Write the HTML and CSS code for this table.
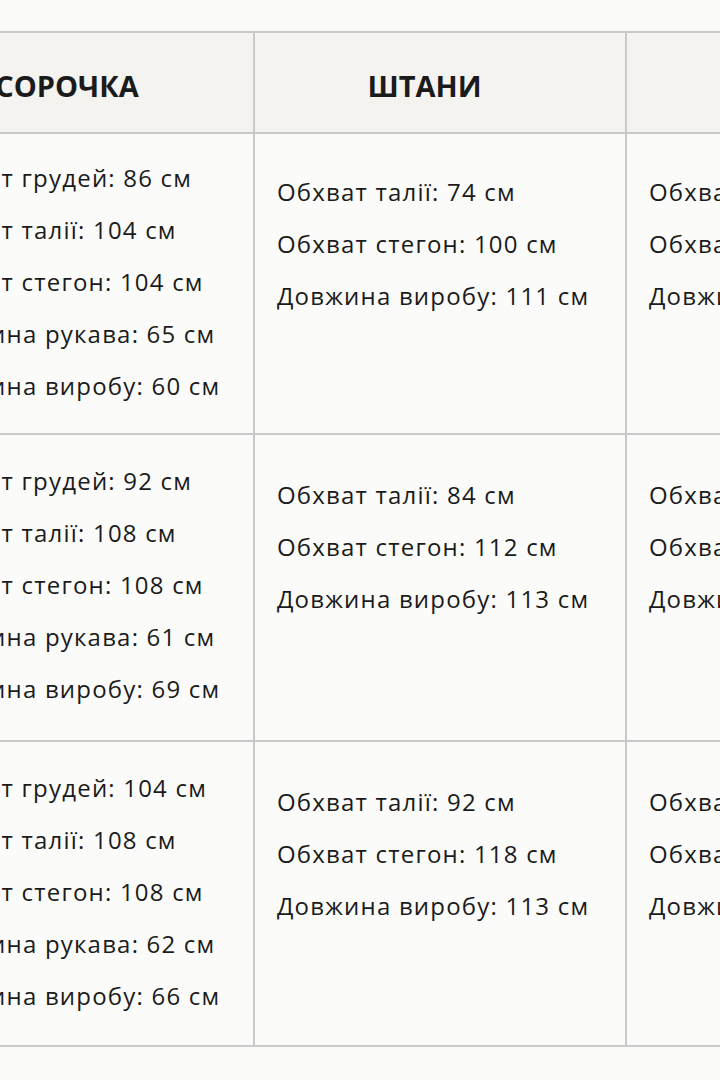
FILE: index.html
```html
<!DOCTYPE html>
<html lang="uk">
<head>
<meta charset="utf-8">
<title>Розміри</title>
<link rel="stylesheet" href="styles.css">
</head>
<body>
<div class="wrap">
<table class="sizes">
  <colgroup>
    <col class="c1"><col class="c2"><col class="c3">
  </colgroup>
  <thead>
    <tr class="hr">
      <th class="h1">СОРОЧКА</th>
      <th class="h2">ШТАНИ</th>
      <th class="h3">ЖИЛЕТ</th>
    </tr>
  </thead>
  <tbody>
    <tr class="r1">
      <td class="main">Обхват грудей: 86 см<br>Обхват талії: 104 см<br>Обхват стегон: 104 см<br>Довжина рукава: 65 см<br>Довжина виробу: 60 см</td>
      <td class="side">Обхват талії: 74 см<br>Обхват стегон: 100 см<br>Довжина виробу: 111 см</td>
      <td class="side">Обхват талії: 74 см<br>Обхват стегон: 100 см<br>Довжина виробу: 111 см</td>
    </tr>
    <tr class="r2">
      <td class="main">Обхват грудей: 92 см<br>Обхват талії: 108 см<br>Обхват стегон: 108 см<br>Довжина рукава: 61 см<br>Довжина виробу: 69 см</td>
      <td class="side">Обхват талії: 84 см<br>Обхват стегон: 112 см<br>Довжина виробу: 113 см</td>
      <td class="side">Обхват талії: 84 см<br>Обхват стегон: 112 см<br>Довжина виробу: 113 см</td>
    </tr>
    <tr class="r3">
      <td class="main">Обхват грудей: 104 см<br>Обхват талії: 108 см<br>Обхват стегон: 108 см<br>Довжина рукава: 62 см<br>Довжина виробу: 66 см</td>
      <td class="side">Обхват талії: 92 см<br>Обхват стегон: 118 см<br>Довжина виробу: 113 см</td>
      <td class="side">Обхват талії: 92 см<br>Обхват стегон: 118 см<br>Довжина виробу: 113 см</td>
    </tr>
  </tbody>
</table>
</div>
</body>
</html>
```
FILE: styles.css
```css
html, body {
  margin: 0;
  padding: 0;
  background: #fafaf9;
  overflow: hidden;
}
body {
  width: 720px;
  height: 1080px;
  font-family: "Open Sans", "Noto Sans", sans-serif;
  color: #1b1b1b;
}
.wrap {
  padding-top: 31px;
  margin-left: -97px;
}
.sizes {
  border-collapse: collapse;
  table-layout: fixed;
  width: 1094px;
}
.c1 { width: 350px; }
.c2 { width: 372px; }
.c3 { width: 372px; }
.sizes th, .sizes td {
  border: 2px solid #c9c9c9;
}
.hr { height: 101px; }
.sizes th {
  background: #f4f3f0;
  font-size: 29px;
  font-weight: 700;
  text-align: center;
  vertical-align: middle;
  padding: 6px 0 0 0;
}
.sizes th.h1 { padding-right: 24px; }
.sizes th.h2 { padding-right: 31px; }
.sizes th.h3 { padding-left: 90px; }
.sizes td {
  background: #fbfbfa;
  font-size: 24px;
  letter-spacing: 1.2px;
  line-height: 52px;
  vertical-align: top;
  text-align: left;
  padding: 18px 20px 0 18px;
  white-space: nowrap;
}
.sizes td.side { padding-top: 32px; padding-left: 22px; }
.r1 { height: 301px; }
.r2 { height: 307px; }
.r3 { height: 305px; }
.r2 td, .r3 td { padding-top: 20px; }
.r2 td.side, .r3 td.side { padding-top: 34px; }
```
